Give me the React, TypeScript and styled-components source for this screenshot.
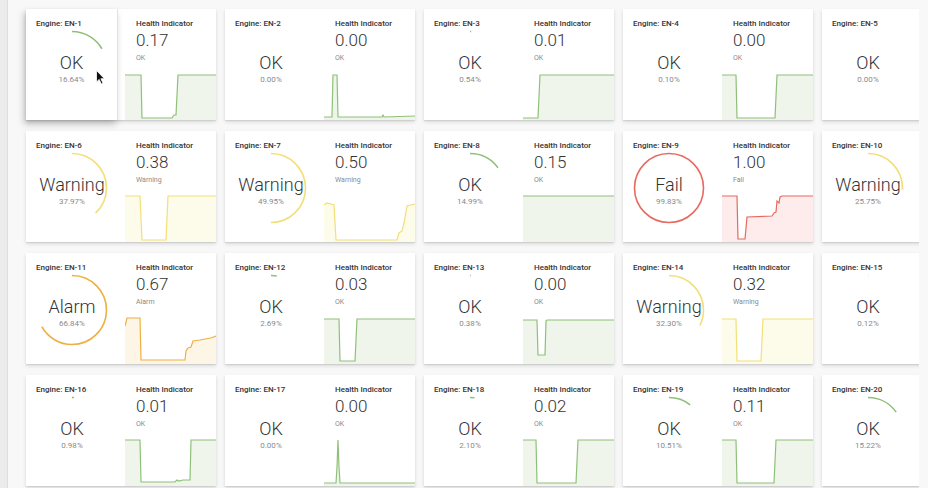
import styled, { createGlobalStyle, css } from "styled-components";

type Level = "ok" | "warning" | "alarm" | "fail";

const tones: Record<Level, { line: string; fill: string; label: string }> = {
  ok: { line: "#8fc07a", fill: "#eff5ea", label: "OK" },
  warning: { line: "#f2df78", fill: "#fdfbea", label: "Warning" },
  alarm: { line: "#eeb042", fill: "#fdf5e6", label: "Alarm" },
  fail: { line: "#e66a5f", fill: "#fdeceb", label: "Fail" },
};

type Engine = {
  id: string;
  level: Level;
  pct: number;
  health: string;
  series: number[][];
  hover?: boolean;
};

const engines: Engine[] = [
  { id: "EN-1", level: "ok", pct: 16.64, health: "0.17", hover: true,
    series: [[0, 4], [16, 4], [17, 47], [47, 47], [49, 44], [51, 44], [53, 4], [91, 4]] },
  { id: "EN-2", level: "ok", pct: 0, health: "0.00",
    series: [[0, 46], [8, 46], [9, 4], [13, 4], [14, 46], [58, 46], [59, 44], [60, 46], [91, 45]] },
  { id: "EN-3", level: "ok", pct: 0.54, health: "0.01",
    series: [[0, 47], [15, 47], [17, 4], [91, 4]] },
  { id: "EN-4", level: "ok", pct: 0.1, health: "0.00",
    series: [[0, 4], [14, 4], [15, 47], [53, 47], [55, 4], [91, 4]] },
  { id: "EN-5", level: "ok", pct: 0, health: "0.00",
    series: [[0, 46], [91, 46]] },

  { id: "EN-6", level: "warning", pct: 37.97, health: "0.38",
    series: [[0, 3], [15, 3], [17, 47], [41, 47], [43, 3], [91, 3]] },
  { id: "EN-7", level: "warning", pct: 49.95, health: "0.50",
    series: [[0, 12], [3, 10], [10, 12], [12, 47], [73, 47], [75, 40], [78, 38], [80, 30], [83, 13], [91, 11]] },
  { id: "EN-8", level: "ok", pct: 14.99, health: "0.15",
    series: [[0, 3], [91, 3]] },
  { id: "EN-9", level: "fail", pct: 99.83, health: "1.00",
    series: [[0, 3], [15, 3], [16, 46], [23, 46], [25, 24], [50, 23], [52, 20], [54, 19], [55, 8], [57, 10], [58, 4], [60, 3], [91, 3]] },
  { id: "EN-10", level: "warning", pct: 25.75, health: "0.26",
    series: [[0, 3], [20, 3], [21, 46], [60, 46], [62, 3], [91, 3]] },

  { id: "EN-11", level: "alarm", pct: 66.84, health: "0.67",
    series: [[0, 11], [2, 3], [15, 3], [16, 45], [60, 45], [61, 36], [63, 33], [66, 32], [68, 26], [75, 25], [80, 24], [86, 23], [91, 21]] },
  { id: "EN-12", level: "ok", pct: 2.69, health: "0.03",
    series: [[0, 4], [15, 4], [16, 46], [31, 46], [33, 4], [91, 4]] },
  { id: "EN-13", level: "ok", pct: 0.38, health: "0.00",
    series: [[0, 5], [14, 5], [15, 40], [22, 40], [23, 6], [24, 5], [91, 5]] },
  { id: "EN-14", level: "warning", pct: 32.3, health: "0.32",
    series: [[0, 4], [14, 4], [15, 46], [39, 46], [41, 4], [91, 4]] },
  { id: "EN-15", level: "ok", pct: 0.12, health: "0.00",
    series: [[0, 46], [91, 46]] },

  { id: "EN-16", level: "ok", pct: 0.98, health: "0.01",
    series: [[0, 3], [15, 3], [16, 45], [50, 45], [52, 43], [54, 44], [58, 43], [65, 43], [66, 3], [91, 3]] },
  { id: "EN-17", level: "ok", pct: 0, health: "0.00",
    series: [[0, 46], [12, 46], [13, 30], [14, 3], [15, 30], [16, 46], [91, 46]] },
  { id: "EN-18", level: "ok", pct: 2.1, health: "0.02",
    series: [[0, 3], [13, 3], [14, 46], [53, 46], [55, 3], [91, 3]] },
  { id: "EN-19", level: "ok", pct: 10.51, health: "0.11",
    series: [[0, 3], [14, 3], [15, 46], [52, 46], [54, 3], [91, 3]] },
  { id: "EN-20", level: "ok", pct: 15.22, health: "0.15",
    series: [[0, 3], [14, 3], [15, 46], [52, 46], [54, 3], [91, 3]] },
];

const GlobalStyle = createGlobalStyle`
  html, body { margin: 0; padding: 0; background: #f8f8f8; overflow: hidden; }
  body { font-family: Roboto, "Liberation Sans", sans-serif; color: #333; }
`;

const Page = styled.div`
  position: relative;
  display: flex;
  width: 928px;
  height: 488px;
  overflow: hidden;
  background: #f8f8f8;
`;

const SideRail = styled.div`
  flex: none;
  width: 7px;
  background: #ebebeb;
  border-right: 1px solid #dedede;
`;

/* the dashboard pane ends a little before the window edge */
const Viewport = styled.div`
  flex: none;
  width: 911px;
  height: 100%;
  overflow: hidden;
`;

const Grid = styled.main`
  display: grid;
  grid-template-columns: repeat(5, 190px);
  grid-auto-rows: 111px;
  column-gap: 9px;
  row-gap: 11px;
  padding: 9px 0 0 18px;
`;

const Card = styled.section`
  display: grid;
  grid-template-columns: 92px 1fr;
  background: #fff;
  box-shadow: 0 1px 1px rgba(0, 0, 0, 0.08), 0 2px 4px rgba(0, 0, 0, 0.12);
`;

const GaugePanel = styled.div<{ $hover?: boolean }>`
  position: relative;
  display: flex;
  flex-direction: column;
  padding-top: 10px;
  background: #fff;

  ${({ $hover }) =>
    $hover &&
    css`
      z-index: 1;
      border-right: 1px solid #e2e2e2;
      box-shadow: -2px 4px 7px rgba(0, 0, 0, 0.22);
    `}
`;

const Title = styled.div`
  padding-left: 10px;
  font-size: 8px;
  line-height: 10px;
  font-weight: 500;
  color: #333;
  white-space: nowrap;
`;

const Dial = styled.div`
  display: grid;
  justify-items: center;
  margin-top: 1px;

  & > * { grid-area: 1 / 1; }
`;

const DialText = styled.div`
  display: flex;
  flex-direction: column;
  align-items: center;
  margin-top: 23px;
`;

const DialLabel = styled.div`
  font-size: 18px;
  line-height: 20px;
  font-weight: 300;
  color: #333;
`;

const DialPct = styled.div`
  margin-top: 2px;
  font-size: 8px;
  line-height: 10px;
  color: #8a8a8a;
`;

const InfoPanel = styled.div`
  display: flex;
  flex-direction: column;
  padding-top: 10px;
  min-width: 0;
`;

const InfoText = styled.div`
  padding-left: 18px;
  white-space: nowrap;
`;

const InfoTitle = styled.div`
  font-size: 8px;
  line-height: 10px;
  font-weight: 500;
  color: #333;
`;

const Value = styled.div`
  margin-top: 1px;
  font-size: 17px;
  line-height: 20px;
  font-weight: 300;
  color: #333;
`;

const Status = styled.div`
  margin-top: 3px;
  font-size: 7px;
  line-height: 10px;
  color: #8a8a8a;
`;

const Chart = styled.svg`
  display: block;
  margin-top: auto;
  margin-left: 7px;
  width: 91px;
  height: 49px;
`;

const Cursor = styled.svg`
  position: absolute;
  z-index: 5;
  left: 96px;
  top: 70px;
  width: 9px;
  height: 15px;
  pointer-events: none;
`;

const R = 34.5;
const C = 2 * Math.PI * R;

function Gauge({ level, pct }: { level: Level; pct: number }) {
  const len = (pct / 100) * C;
  return (
    <svg width="72" height="72" viewBox="0 0 72 72">
      {pct > 0 && (
        <circle
          cx="36"
          cy="36"
          r={R}
          fill="none"
          stroke={tones[level].line}
          strokeWidth="1.6"
          strokeDasharray={`${len} ${C}`}
          transform="rotate(-90 36 36)"
        />
      )}
    </svg>
  );
}

const toPath = (pts: number[][]) =>
  pts.map(([x, y], i) => `${i ? "L" : "M"}${x} ${y}`).join(" ");

function Spark({ level, series }: { level: Level; series: number[][] }) {
  const line = toPath(series);
  return (
    <Chart viewBox="0 0 91 49" preserveAspectRatio="none">
      <path d={`${line} L91 49 L0 49 Z`} fill={tones[level].fill} />
      <path d={line} fill="none" stroke={tones[level].line} strokeWidth="1.2" />
    </Chart>
  );
}

function EngineCard({ e }: { e: Engine }) {
  const tone = tones[e.level];
  return (
    <Card>
      <GaugePanel $hover={e.hover}>
        <Title>Engine: {e.id}</Title>
        <Dial>
          <Gauge level={e.level} pct={e.pct} />
          <DialText>
            <DialLabel>{tone.label}</DialLabel>
            <DialPct>{e.pct.toFixed(2)}%</DialPct>
          </DialText>
        </Dial>
      </GaugePanel>
      <InfoPanel>
        <InfoText>
          <InfoTitle>Health Indicator</InfoTitle>
          <Value>{e.health}</Value>
          <Status>{tone.label}</Status>
        </InfoText>
        <Spark level={e.level} series={e.series} />
      </InfoPanel>
    </Card>
  );
}

export default function App() {
  return (
    <>
      <GlobalStyle />
      <Page>
        <SideRail />
        <Viewport>
          <Grid>
            {engines.map((e) => (
              <EngineCard key={e.id} e={e} />
            ))}
          </Grid>
        </Viewport>
        <Cursor viewBox="0 0 9 15">
          <path
            d="M0.5 0.5 L0.5 12 L3.2 9.4 L5.3 14 L7 13.2 L4.9 8.7 L8.4 8.7 Z"
            fill="#111"
            stroke="#fff"
            strokeWidth="0.8"
            strokeLinejoin="round"
          />
        </Cursor>
      </Page>
    </>
  );
}
